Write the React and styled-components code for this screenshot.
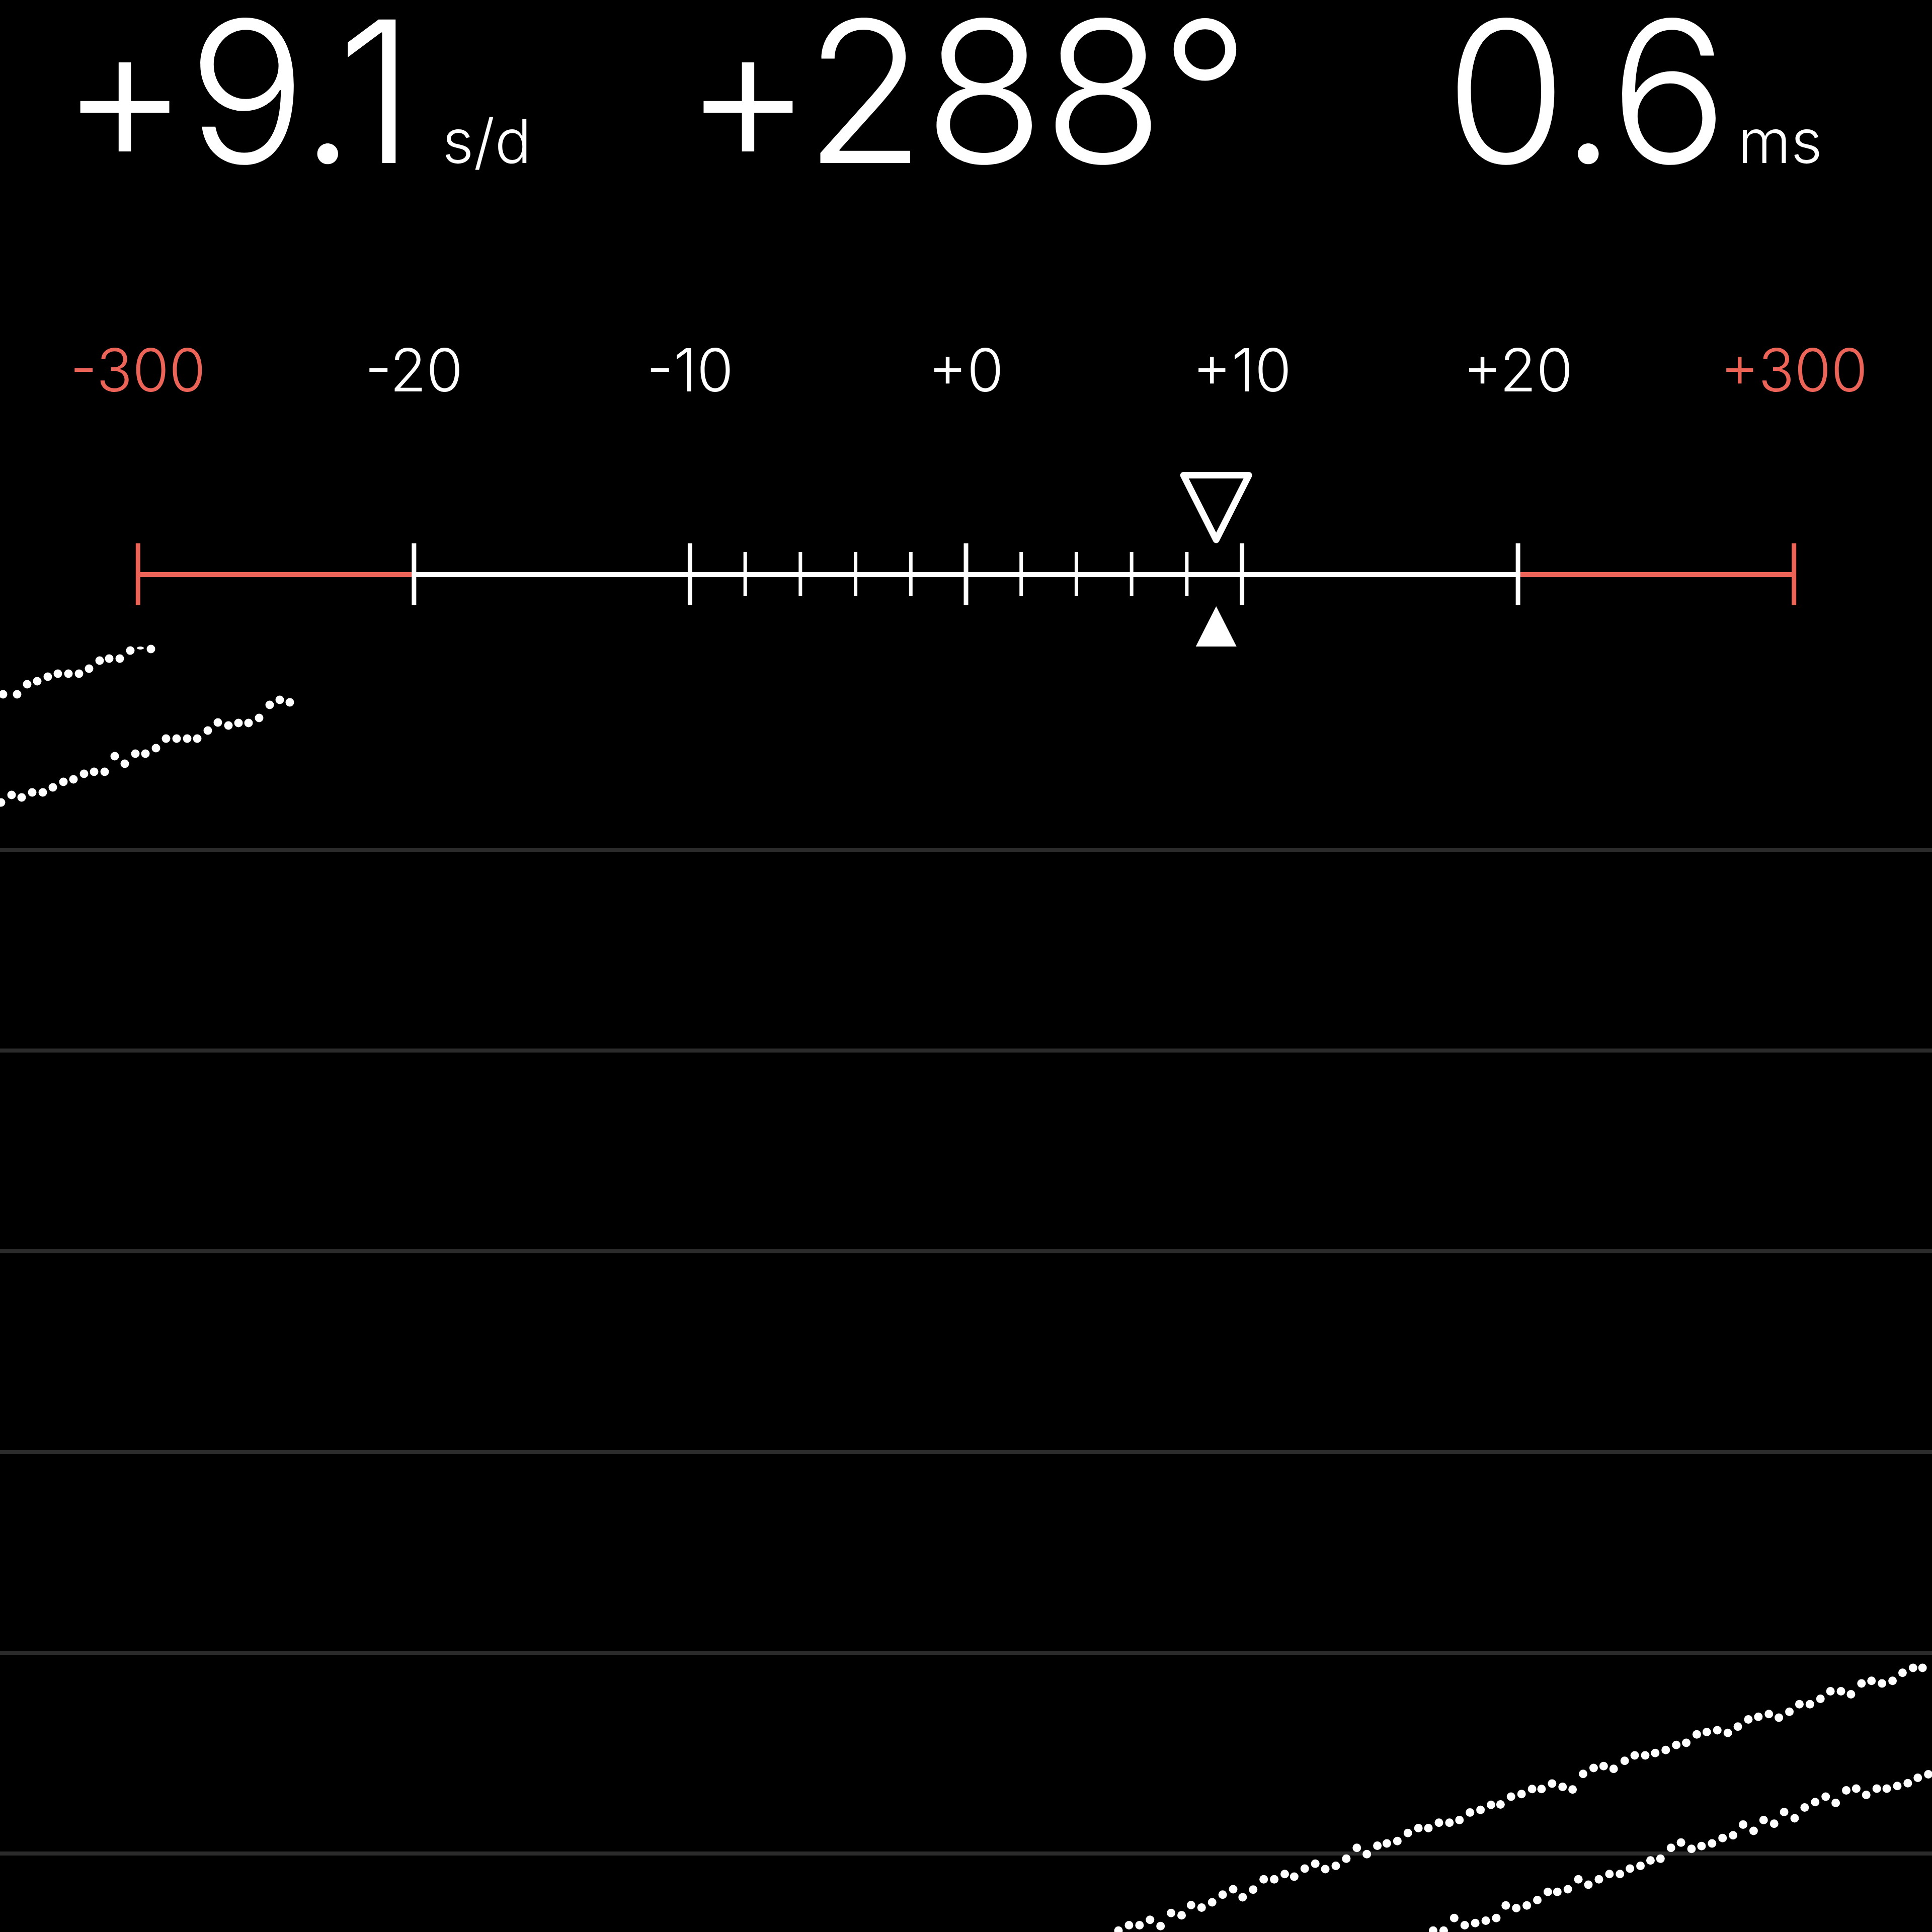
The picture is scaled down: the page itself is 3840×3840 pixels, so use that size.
import React from 'react';
import styled, { createGlobalStyle } from 'styled-components';

const Global = createGlobalStyle`
  html, body { margin: 0; padding: 0; background: #000; }
  #root { width: 3840px; height: 3840px; }
`;

const RED = '#ec6358';
const GRID = '#2b2b2b';

const Screen = styled.main`
  width: 3840px;
  height: 3840px;
  background: #000;
  color: #fff;
  overflow: hidden;
  display: flex;
  flex-direction: column;
  font-family: Inter, "Liberation Sans", "Helvetica Neue", sans-serif;
`;

const Readouts = styled.header`
  display: grid;
  grid-template-columns: 1fr auto 1fr;
  align-items: baseline;
  height: 363px;
  flex: none;
`;

const Readout = styled.div`
  justify-self: ${p => p.$align};
  display: flex;
  align-items: baseline;
  padding-left: ${p => p.$padL || 0}px;
  padding-right: ${p => p.$padR || 0}px;
`;

const Value = styled.span`
  font-size: 392px;
  font-weight: 300;
  line-height: 363px;
  letter-spacing: -3px;
`;

const Unit = styled.span`
  font-size: 121px;
  font-weight: 300;
  line-height: 1;
  margin-left: ${p => p.$gap}px;
`;

const ScaleLabels = styled.div`
  display: grid;
  grid-template-columns: repeat(7, 1fr);
  height: 120px;
  margin-top: 312px;
  flex: none;
`;

const ScaleLabel = styled.span`
  text-align: center;
  font-size: 118px;
  font-weight: 300;
  line-height: 120px;
  color: ${p => (p.$alert ? RED : '#fff')};
`;

const Gauge = styled.svg`
  display: block;
  flex: none;
  width: 3840px;
  height: 364px;
  margin-top: 135px;
`;

const Chart = styled.section`
  position: relative;
  flex: 1;
  display: flex;
  flex-direction: column;
`;

const GridRow = styled.div`
  flex: none;
  height: 399px;
  box-sizing: border-box;
  border-bottom: 8px solid ${GRID};
`;

const Trace = styled.svg`
  position: absolute;
  left: 0;
  top: 0;
  width: 3840px;
  height: 2546px;
  overflow: visible;
  pointer-events: none;
`;

const LABELS = ['-300', '-20', '-10', '+0', '+10', '+20', '+300'];
const STEP = 3840 / 7;
const tickX = i => STEP / 2 + i * STEP;
const RATE = 9.1;
const indicatorX = 1920 + RATE * (STEP / 10) - 2;

const CHART_TOP = 1294;

const seriesA = [
  [6, 1380], [34, 1380], [54, 1360], [74, 1354], [95, 1345], [115, 1339], [136, 1339],
  [157, 1339], [177, 1329], [198, 1313], [217, 1309], [238, 1309], [259, 1293], [300, 1290],
];
const seriesB = [
  [2, 1595], [23, 1580], [43, 1585], [64, 1575], [85, 1575], [105, 1565], [126, 1554],
  [146, 1549], [167, 1538], [187, 1534], [208, 1534], [228, 1503], [248, 1518], [269, 1498],
  [289, 1498], [310, 1487], [330, 1468], [351, 1468], [372, 1468], [392, 1468], [413, 1452],
  [433, 1436], [454, 1442], [474, 1437], [494, 1437], [515, 1427], [536, 1401], [556, 1391],
  [576, 1396],
];
const rawC = [
  [22, 1560], [42, 1530], [62, 1530], [82, 1500], [102, 1535], [122, 1462], [142, 1475],
  [160, 1418], [180, 1432], [200, 1403], [220, 1360], [240, 1330], [258, 1375], [278, 1332],
  [298, 1275], [318, 1275], [338, 1245], [356, 1260], [376, 1215], [396, 1188], [415, 1218],
  [435, 1200], [455, 1160], [475, 1100], [494, 1135], [514, 1088], [532, 1075], [552, 1062],
  [572, 1017], [592, 990], [611, 990], [631, 960], [651, 960], [670, 945], [690, 903],
  [710, 888], [730, 860], [748, 858], [768, 815], [788, 800], [808, 772], [826, 772],
  [846, 742], [866, 760], [885, 775], [905, 688], [925, 655], [944, 645], [963, 660],
  [984, 615], [1003, 585], [1023, 585], [1042, 572], [1062, 555], [1082, 527], [1101, 515],
  [1121, 468], [1140, 455], [1160, 445], [1180, 460], [1199, 425], [1219, 385], [1238, 370],
  [1258, 355], [1277, 375], [1297, 342], [1316, 300], [1336, 300], [1356, 270], [1375, 228],
  [1395, 228], [1414, 245], [1434, 185], [1453, 170], [1473, 185], [1493, 170], [1512, 125],
  [1532, 98], [1550, 98],
];
const rawD = [
  [620, 1560], [640, 1560], [660, 1490], [680, 1530], [700, 1518], [720, 1505], [740, 1490],
  [758, 1420], [778, 1435], [798, 1420], [818, 1390], [838, 1345], [856, 1345], [876, 1330],
  [896, 1275], [915, 1305], [935, 1275], [955, 1245], [975, 1245], [994, 1215], [1014, 1200],
  [1033, 1170], [1052, 1160], [1072, 1100], [1091, 1070], [1111, 1105], [1130, 1090],
  [1150, 1075], [1170, 1045], [1190, 1030], [1209, 970], [1229, 1005], [1248, 945],
  [1268, 965], [1287, 900], [1307, 935], [1326, 875], [1346, 845], [1366, 815], [1385, 850],
  [1405, 780], [1424, 770], [1443, 805], [1463, 770], [1482, 770], [1502, 755], [1522, 740],
  [1541, 710], [1561, 690],
];
const fromZoom = ([dx, dy]) => [2200 + dx * (1640 / 1568), 3280 + dy * (560 / 1568)];
const seriesC = rawC.map(fromZoom);
const seriesD = rawD.map(fromZoom);

function Dots({ points }) {
  return points.map(([x, y], i) => (
    <circle key={i} cx={x} cy={y - CHART_TOP} r={8.5} fill="#fff" />
  ));
}

export default function App() {
  const minors = [];
  [2, 3].forEach(seg => {
    for (let k = 1; k <= 4; k++) minors.push(tickX(seg) + k * (STEP / 5));
  });
  const ix = indicatorX;
  return (
    <>
      <Global />
      <Screen>
        <Readouts>
          <Readout $align="start" $padL={120}>
            <Value>+9.1</Value>
            <Unit $gap={58}>s/d</Unit>
          </Readout>
          <Readout $align="center">
            <Value>+288°</Value>
          </Readout>
          <Readout $align="end" $padR={218}>
            <Value>0.6</Value>
            <Unit $gap={22}>ms</Unit>
          </Readout>
        </Readouts>

        <ScaleLabels>
          {LABELS.map((l, i) => (
            <ScaleLabel key={l} $alert={i === 0 || i === LABELS.length - 1}>{l}</ScaleLabel>
          ))}
        </ScaleLabels>

        <Gauge viewBox="0 0 3840 364">
          <line x1={tickX(0)} y1={212} x2={tickX(1)} y2={212} stroke={RED} strokeWidth={10} />
          <line x1={tickX(1)} y1={212} x2={tickX(5)} y2={212} stroke="#fff" strokeWidth={10} />
          <line x1={tickX(5)} y1={212} x2={tickX(6)} y2={212} stroke={RED} strokeWidth={10} />
          {LABELS.map((l, i) => (
            <line
              key={l}
              x1={tickX(i)}
              y1={150}
              x2={tickX(i)}
              y2={273}
              stroke={i === 0 || i === 6 ? RED : '#fff'}
              strokeWidth={9}
            />
          ))}
          {minors.map(x => (
            <line key={x} x1={x} y1={167} x2={x} y2={255} stroke="#fff" strokeWidth={7} />
          ))}
          <polygon
            points={`${ix - 65},14.5 ${ix + 65},14.5 ${ix},143`}
            fill="none"
            stroke="#fff"
            strokeWidth={13}
            strokeLinejoin="round"
          />
          <polygon points={`${ix - 40.5},355 ${ix + 40.5},355 ${ix},275`} fill="#fff" />
        </Gauge>

        <Chart>
          {Array.from({ length: 6 }).map((_, i) => (
            <GridRow key={i} />
          ))}
          <Trace viewBox="0 0 3840 2546">
            <Dots points={seriesA} />
            <ellipse cx={279} cy={1288 - CHART_TOP} rx={7} ry={3} fill="#fff" />
            <Dots points={seriesB} />
            <Dots points={seriesC} />
            <Dots points={seriesD} />
          </Trace>
        </Chart>
      </Screen>
    </>
  );
}
